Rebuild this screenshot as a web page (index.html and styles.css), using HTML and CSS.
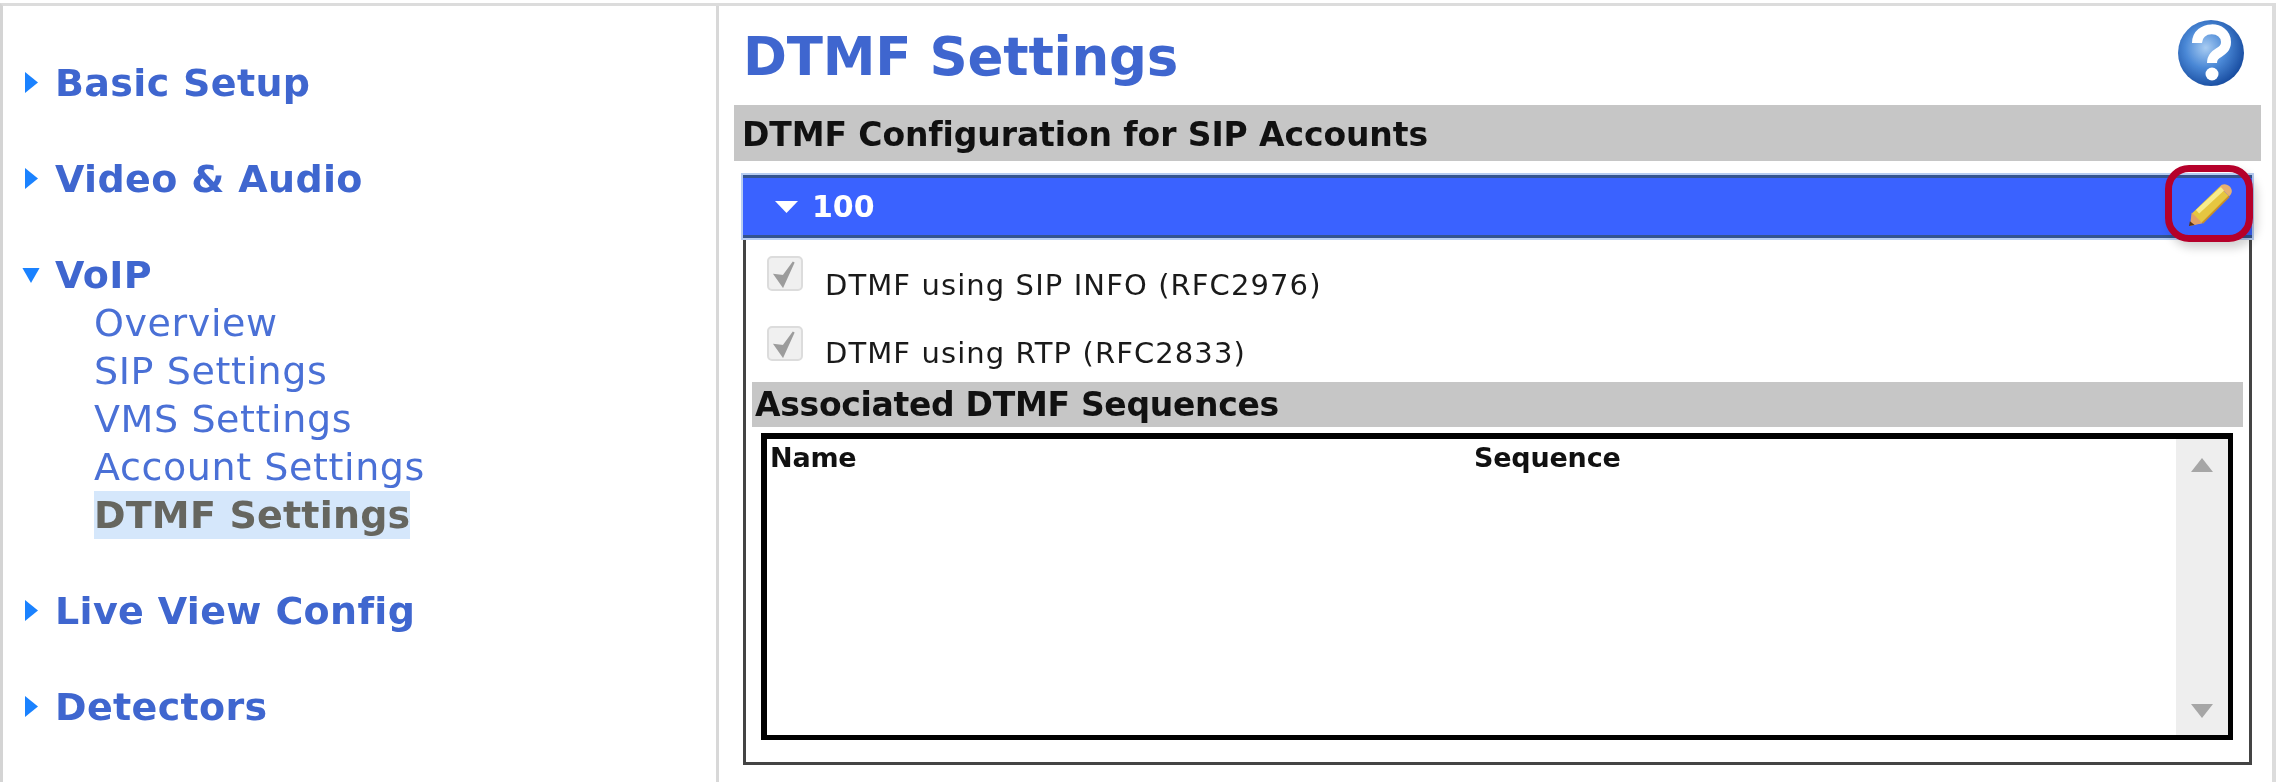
FILE: index.html
```html
<!DOCTYPE html>
<html lang="en">
<head>
<meta charset="utf-8">
<title>DTMF Settings</title>
<link rel="stylesheet" href="styles.css">
</head>
<body>
<div class="frame">
  <nav class="side">
    <a class="head"><svg class="tri" viewBox="0 0 10 16"><path d="M0 0 L10 8 L0 16Z"/></svg>Basic Setup</a>
    <a class="head"><svg class="tri" viewBox="0 0 10 16"><path d="M0 0 L10 8 L0 16Z"/></svg>Video &amp; Audio</a>
    <div class="group">
      <a class="head open"><svg class="tri-d" viewBox="0 0 16 14"><path d="M0 0 H16 L8 14Z"/></svg>VoIP</a>
      <a class="sub">Overview</a>
      <a class="sub">SIP Settings</a>
      <a class="sub">VMS Settings</a>
      <a class="sub">Account Settings</a>
      <a class="sub"><span class="current">DTMF Settings</span></a>
    </div>
    <a class="head"><svg class="tri" viewBox="0 0 10 16"><path d="M0 0 L10 8 L0 16Z"/></svg>Live View Config</a>
    <a class="head"><svg class="tri" viewBox="0 0 10 16"><path d="M0 0 L10 8 L0 16Z"/></svg>Detectors</a>
  </nav>
  <main class="main">
    <div class="title-row">
      <h1>DTMF Settings</h1>
      <svg class="help" viewBox="0 0 70 70">
        <defs>
          <radialGradient id="hb" cx="42%" cy="42%" r="62%">
            <stop offset="0" stop-color="#a8ccf2"/>
            <stop offset=".5" stop-color="#4a88d6"/>
            <stop offset="1" stop-color="#164a9e"/>
          </radialGradient>
        </defs>
        <circle cx="35" cy="35" r="33" fill="url(#hb)"/>
        <path d="M21 25 C21 7 50 7 50 24 C50 36 36 33 36 45" fill="none" stroke="#fff" stroke-width="10"/>
        <circle cx="36" cy="56" r="6.500" fill="#fff"/>
      </svg>
    </div>
    <div class="bar">DTMF Configuration for SIP Accounts</div>
    <section class="panel">
      <div class="panel-head"><svg class="tri-w" viewBox="0 0 16 12" preserveAspectRatio="none"><path d="M0 0 H16 L8 12Z"/></svg>100</div>
      <div class="panel-body">
        <label class="check"><span class="box"><svg viewBox="0 0 24 24"><path d="M3 13 L10 23 L20 1 L10.500 14Z" fill="#9c9c9c" stroke="#9c9c9c" stroke-width="2"/></svg></span><span class="check-text">DTMF using SIP INFO (RFC2976)</span></label>
        <label class="check second"><span class="box"><svg viewBox="0 0 24 24"><path d="M3 13 L10 23 L20 1 L10.500 14Z" fill="#9c9c9c" stroke="#9c9c9c" stroke-width="2"/></svg></span><span class="check-text">DTMF using RTP (RFC2833)</span></label>
        <div class="bar2">Associated DTMF Sequences</div>
        <div class="list">
          <div class="cols"><span class="col-name">Name</span><span>Sequence</span></div>
          <div class="scroll">
            <svg class="arrow" viewBox="0 0 22 14"><path d="M11 0 L22 14 H0Z"/></svg>
            <svg class="arrow" viewBox="0 0 22 14"><path d="M0 0 H22 L11 14Z"/></svg>
          </div>
        </div>
      </div>
      <div class="callout"><svg class="pencil" viewBox="0 0 46 46">
        <path d="M4 33 L33 5 L43 15 L14 43 L3 45Z" fill="#e6c640"/>
        <path d="M33 5 C36 1 41 2 44 5 C47 9 46 12 43 15Z" fill="#e8b070"/>
        <path d="M10 31 L36 7" stroke="#f8ec8c" stroke-width="5"/>
        <path d="M4 32 L15 43 L2 46 Z" fill="#e2a066"/>
        <path d="M2 41 L7 45 L1 46Z" fill="#5a3418"/>
        <path d="M15 43 L43 15" stroke="#c98f2a" stroke-width="2"/>
      </svg></div>
    </section>
  </main>
</div>
</body>
</html>
```
FILE: styles.css
```css
* { box-sizing: border-box; }
html, body { margin: 0; height: 100%; background: #fff; }
body { overflow: hidden; font-family: "DejaVu Sans", sans-serif; }
.frame {
  height: 782px;
  margin-top: 3px;
  border-top: 3px solid #dcdcdc;
  border-left: 3px solid #d4d4d4;
  border-right: 4px solid #dcdcdc;
  display: flex;
  filter: blur(0.6px);
}
.side {
  width: 716px;
  flex: none;
  border-right: 3px solid #d8d8d8;
  padding: 53px 0 0 0;
  display: flex;
  flex-direction: column;
  gap: 48px;
}
.head {
  display: flex;
  align-items: center;
  height: 48px;
  padding-left: 52px;
  position: relative;
  font-weight: 700;
  font-size: 38px;
  letter-spacing: 0.35px;
  color: #3f66cf;
}
.tri { position: absolute; left: 22px; top: 13px; width: 13px; height: 21px; fill: #1a82ff; }
.tri-d { position: absolute; left: 18px; top: 17px; width: 20px; height: 15px; fill: #1a82ff; }
.group { display: flex; flex-direction: column; }
.sub {
  display: flex;
  align-items: center;
  height: 48px;
  padding-left: 91px;
  font-size: 38px;
  letter-spacing: 0.6px;
  color: #4a70d6;
}
.current {
  font-weight: 700;
  color: #66665f;
  background: #d5e7fb;
  line-height: 48px;
  letter-spacing: 0.2px;
}
.main { flex: 1; padding-left: 15px; padding-right: 11px; display: flex; flex-direction: column; min-width: 0; }
.title-row { display: flex; justify-content: space-between; align-items: center; height: 99px; padding: 2px 15px 0 9px; }
h1 { margin: 0; font-size: 53px; font-weight: 700; letter-spacing: -0.2px; color: #3f66cf; }
.help { width: 70px; height: 70px; position: relative; top: -4px; }
.bar {
  height: 56px;
  background: #c6c6c6;
  display: flex;
  align-items: center;
  padding: 3px 0 0 8px;
  font-size: 33px;
  font-weight: 700;
  letter-spacing: -0.1px;
  color: #111;
}
.panel {
  margin-top: 14px;
  margin-left: 9px;
  width: 1509px;
  height: 590px;
  border: 3px solid #444;
  border-top: none;
  position: relative;
}
.panel-head {
  margin: 0 -3px;
  height: 63px;
  background: #3a62ff;
  border-top: 3px solid #34548f;
  border-bottom: 3px solid #34548f;
  box-shadow: 0 0 0 2px #b7cdf2;
  color: #fff;
  font-size: 30px;
  font-weight: 700;
  display: flex;
  align-items: center;
  padding-left: 32px;
}
.tri-w { width: 23px; height: 12px; fill: #fff; margin-right: 14px; }
.panel-body { padding: 18px 0 0 6px; }
.check { display: flex; height: 70px; color: #1a1a1a; font-size: 29px; }
.check.second { height: 56px; }
.box {
  width: 36px;
  height: 35px;
  margin-left: 15px;
  border: 2px solid #dcdcdc;
  border-radius: 5px;
  background: #f0f0f0;
  flex: none;
  display: flex;
  align-items: center;
  justify-content: center;
}
.box svg { width: 26px; height: 28px; }
.check-text { margin-left: 22px; padding-top: 12px; letter-spacing: 1.1px; }
.second .check-text { padding-top: 10px; }
.bar2 {
  width: 1491px;
  height: 45px;
  background: #c6c6c6;
  display: flex;
  align-items: center;
  padding-left: 3px;
  font-size: 33px;
  font-weight: 700;
  letter-spacing: -0.3px;
  color: #111;
}
.list {
  margin: 6px 0 0 9px;
  width: 1472px;
  height: 307px;
  border: 5px solid #000;
  border-left-width: 6px;
  border-top-width: 6px;
  position: relative;
}
.cols { display: flex; padding: 3px 0 0 3px; font-size: 27px; font-weight: 700; letter-spacing: -0.2px; color: #111; }
.col-name { width: 704px; }
.scroll {
  position: absolute;
  right: 0;
  top: 0;
  bottom: 0;
  width: 52px;
  background: #eee;
  display: flex;
  flex-direction: column;
  justify-content: space-between;
  align-items: center;
  padding: 19px 0 17px;
}
.arrow { width: 22px; height: 14px; fill: #a6a6a6; }
.callout {
  position: absolute;
  right: -4px;
  top: -10px;
  width: 88px;
  height: 77px;
  border: 7px solid #b5002a;
  border-radius: 24px;
  box-shadow: 4px 6px 10px rgba(0,0,0,.18);
  display: flex;
  align-items: center;
  justify-content: center;
}
.pencil { width: 46px; height: 44px; margin-left: 2px; }
```
